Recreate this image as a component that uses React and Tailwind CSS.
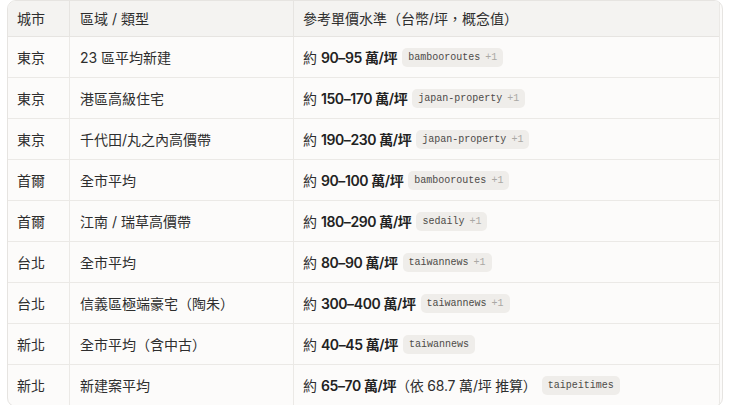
import React from 'react';

const rows = [
  { city: "東京", area: "23 區平均新建", range: "90–95", src: "bambooroutes", more: true },
  { city: "東京", area: "港區高級住宅", range: "150–170", src: "japan-property", more: true },
  { city: "東京", area: "千代田/丸之內高價帶", range: "190–230", src: "japan-property", more: true },
  { city: "首爾", area: "全市平均", range: "90–100", src: "bambooroutes", more: true },
  { city: "首爾", area: "江南 / 瑞草高價帶", range: "180–290", src: "sedaily", more: true },
  { city: "台北", area: "全市平均", range: "80–90", src: "taiwannews", more: true },
  { city: "台北", area: "信義區極端豪宅（陶朱）", range: "300–400", src: "taiwannews", more: true },
  { city: "新北", area: "全市平均（含中古）", range: "40–45", src: "taiwannews", more: false },
  { city: "新北", area: "新建案平均", range: "65–70", src: "taipeitimes", more: false, note: "（依 68.7 萬/坪 推算）" },
];

function Badge({ src, more }) {
  return (
    <span className="ml-[5px] inline-flex items-center h-[19px] px-[6px] rounded-[5px] bg-[#efedea] text-[10px] text-[#4d4b48] font-['Liberation_Mono',monospace]">
      {src}
      {more && <span className="ml-[5px] text-[#aaa8a4]">+1</span>}
    </span>
  );
}

export default function App() {
  return (
    <div className="min-h-[405px] bg-white pl-[7px] pr-[9px] font-['Inter','Noto_Sans_CJK_TC',sans-serif] text-[14px] text-[#2e2e2e]">
      <div className="rounded-[9px] border border-[#e6e4e1] bg-[#fcfbfa] overflow-hidden pr-[2px]">
        <div className="border-r border-[#ebe9e6]">
          <div className="grid grid-cols-[62px_224px_1fr] h-[36px] bg-[#f4f3f1] border-b border-[#e6e4e1]">
            <div className="flex items-center pl-[9px] border-r border-[#e6e4e1]">城市</div>
            <div className="flex items-center pl-[10px] border-r border-[#e6e4e1]">區域 / 類型</div>
            <div className="flex items-center pl-[9px] whitespace-nowrap">參考單價水準（台幣/坪，概念值）</div>
          </div>
          {rows.map((r, i) => (
            <div
              key={i}
              className={`grid grid-cols-[62px_224px_1fr] h-[41px] ${i < rows.length - 1 ? "border-b border-[#ebe9e6]" : ""}`}
            >
              <div className="flex items-center pl-[9px] border-r border-[#ebe9e6]">{r.city}</div>
              <div className="flex items-center pl-[10px] border-r border-[#ebe9e6] whitespace-nowrap">{r.area}</div>
              <div className="flex items-center pl-[9px] whitespace-nowrap">
                <span>約&nbsp;</span>
                <span className="font-semibold text-[#222] tracking-[-0.4px]">{r.range} 萬/坪</span>
                {r.note && <span className="tracking-[-0.2px]">{r.note}</span>}
                <Badge src={r.src} more={r.more} />
              </div>
            </div>
          ))}
        </div>
      </div>
    </div>
  );
}
